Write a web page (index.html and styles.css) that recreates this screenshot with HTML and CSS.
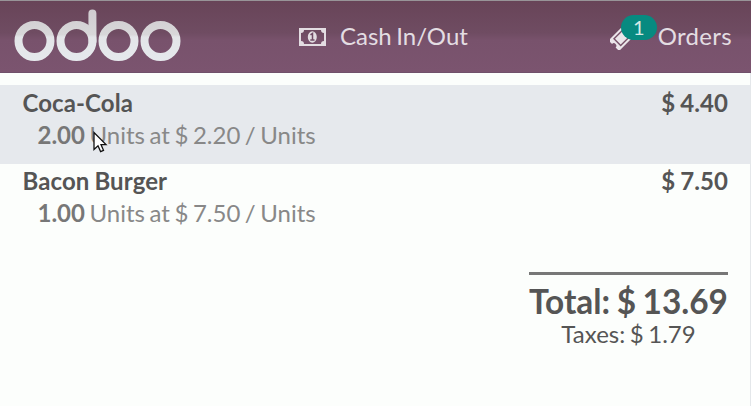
FILE: index.html
```html
<!DOCTYPE html>
<html lang="en">
<head>
<meta charset="utf-8">
<title>Point of Sale</title>
<link rel="stylesheet" href="styles.css">
</head>
<body>
<header class="topbar">
  <svg class="logo" width="168" height="54" viewBox="0 0 168 54" role="img" aria-label="odoo">
    <defs>
      <linearGradient id="silver" gradientUnits="userSpaceOnUse" x1="0" y1="0" x2="0" y2="54">
        <stop offset="0" stop-color="#cfcbcf"/>
        <stop offset=".49" stop-color="#d8d7d9"/>
        <stop offset=".54" stop-color="#e3e5e8"/>
        <stop offset="1" stop-color="#e6e9ed"/>
      </linearGradient>
    </defs>
    <g fill="none" stroke="url(#silver)" stroke-width="8">
      <circle cx="20.500" cy="33" r="16"/>
      <circle cx="62.500" cy="33" r="16"/>
      <circle cx="104.500" cy="33" r="16"/>
      <circle cx="146.500" cy="33" r="16"/>
      <path d="M78.500 33L78.400 5.500" stroke-linecap="round"/>
    </g>
  </svg>
  <div class="action cash">
    <svg class="bill" width="27" height="18" viewBox="0 0 27 18">
      <path fill="#e3dde2" fill-rule="evenodd" d="M0 0H27V18H0ZM5 2Q5 5 2 5V13Q5 13 5 16H22Q22 13 25 13V5Q22 5 22 2Z"/>
      <ellipse cx="13.300" cy="9" rx="4.500" ry="5.800" fill="#e3dde2"/>
      <path d="M11.500 6.800L13.500 5.500V12M11.300 12H15.500" fill="none" stroke="#6f4c65" stroke-width="1.500"/>
    </svg>
    <span class="label">Cash In/Out</span>
  </div>
  <div class="action orders">
    <span class="ticket-box">
      <svg width="26" height="26" viewBox="0 0 26 26">
        <g transform="translate(13 12.500) rotate(-45)">
          <path fill="#ebe6ea" d="M-13-7.500H13V-2.500A2.500 2.500 0 0 0 13 2.500V7.500H-13V2.500A2.500 2.500 0 0 0-13-2.500Z"/>
          <rect x="-8" y="-4.700" width="16" height="9.400" fill="none" stroke="#775269" stroke-width="1.400"/>
        </g>
      </svg>
      <span class="badge">1</span>
    </span>
    <span class="label">Orders</span>
  </div>
</header>
<main class="order">
  <ul class="lines">
    <li class="line selected">
      <div class="product"><span>Coca-Cola</span><span class="price">$ 4.40</span></div>
      <div class="info"><b>2.00</b> Units at $ 2.20 / Units</div>
      <svg class="pointer" width="16" height="24" viewBox="0 0 16 24">
        <path d="M2 1.500V18.500L6 14.800L8.600 20.600L11.500 19.300L9 13.600H14Z" fill="#fff" stroke="#111" stroke-width="1.300"/>
      </svg>
    </li>
    <li class="line">
      <div class="product"><span>Bacon Burger</span><span class="price">$ 7.50</span></div>
      <div class="info"><b>1.00</b> Units at $ 7.50 / Units</div>
    </li>
  </ul>
  <div class="summary">
    <div class="total">Total: $ 13.69</div>
    <div class="taxes">Taxes: $ 1.79</div>
  </div>
</main>
</body>
</html>
```

FILE: styles.css
```css
* { box-sizing: border-box; }
body {
  margin: 0;
  height: 406px;
  overflow: hidden;
  background: #fcfefc;
  color: #555;
  font: 24px/32px Lato, sans-serif;
  word-spacing: -1.600px;
}
.topbar {
  display: flex;
  height: 73px;
  border-top: 1px solid #989498;
  border-bottom: 1px solid #70506a;
  background: linear-gradient(#684458, #6f4c62 45%, #78526c 55%, #7b546f);
  color: #e3dde2;
}
.logo { flex: none; margin: 7px 0 0 14px; }
.action { display: flex; align-items: center; height: 71px; white-space: nowrap; }
.label { margin-top: -2px; }
.cash { margin-left: 117px; gap: 14px; }
.bill { margin-top: 1px; }
.orders { margin-left: auto; margin-right: 19px; gap: 22px; }
.orders .label { letter-spacing: .3px; }
.ticket-box { position: relative; width: 26px; height: 26px; }
.ticket-box svg { display: block; }
.badge {
  position: absolute;
  left: 11px;
  top: -9px;
  width: 36px;
  height: 25px;
  border-radius: 13px;
  background: #078a80;
  color: #d5e9e5;
  font-size: 20px;
  line-height: 24px;
  text-align: center;
}
.order { height: 333px; padding-top: 12px; border-right: 1px solid #e4e7ea; }
.lines { list-style: none; margin: 0; padding: 0; }
.line { position: relative; height: 78px; padding: 2px 22px 0 22.500px; }
.selected { height: 79px; background: #e6e9ed; }
.selected + .line { padding-top: 1px; }
.product { display: flex; justify-content: space-between; font-weight: 700; letter-spacing: .1px; word-spacing: -1px; }
.info { padding-left: 15px; color: #888; }
.info b { color: #777; }
.pointer { position: absolute; left: 92px; top: 46px; }
.summary { width: 199px; margin: 30px 22px 0 auto; border-top: 3px solid #777; text-align: center; white-space: nowrap; }
.total { margin-top: 6px; font-size: 33.400px; line-height: 40px; font-weight: 700; }
.taxes { margin-top: 1px; line-height: 24px; }
```
